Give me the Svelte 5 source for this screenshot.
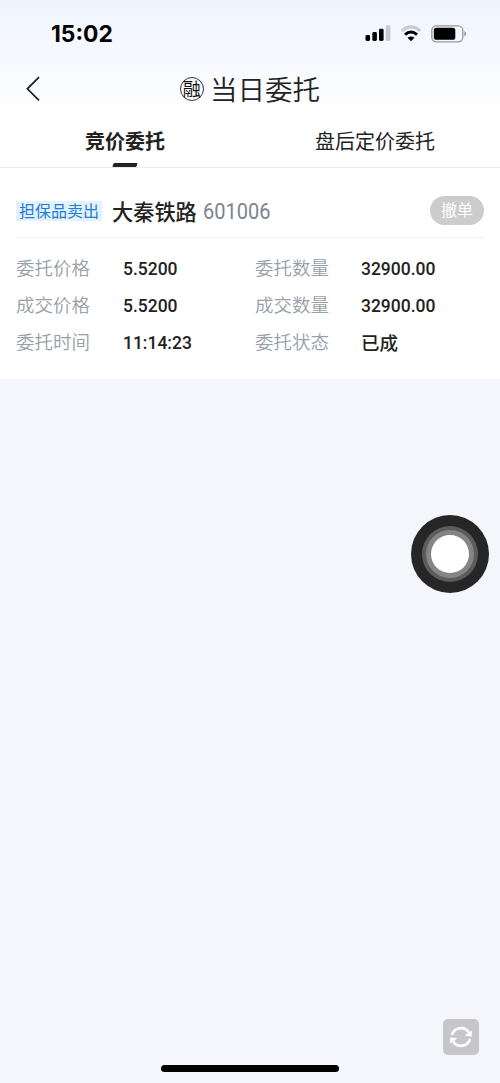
<script lang="ts">
	const tabs = ['竞价委托', '盘后定价委托'];
	let active = $state(0);

	const order = {
		side: '担保品卖出',
		name: '大秦铁路',
		code: '601006',
		fields: [
			{ label: '委托价格', value: '5.5200', num: true },
			{ label: '委托数量', value: '32900.00', num: true },
			{ label: '成交价格', value: '5.5200', num: true },
			{ label: '成交数量', value: '32900.00', num: true },
			{ label: '委托时间', value: '11:14:23', num: true },
			{ label: '委托状态', value: '已成', num: false }
		]
	};
</script>

<div class="screen">
	<header>
		<div class="statusbar">
			<span class="clock">15:02</span>
			<div class="indicators">
				<svg width="26" height="17" viewBox="0 0 26 17">
					<rect x="0.5" y="10" width="4.6" height="6" rx="1.4" />
					<rect x="7.3" y="7" width="4.6" height="9" rx="1.4" />
					<rect x="14" y="3.8" width="4.6" height="12.2" rx="1.4" />
					<rect x="20.8" y="0.3" width="4.6" height="15.7" rx="1.4" fill="#c8cacf" />
				</svg>
				<svg width="22" height="17" viewBox="0 0 22 17">
					<path d="M1.7 5.8 Q11 -2 20.3 5.8" fill="none" stroke="#c8cacf" stroke-width="3" />
					<path d="M5 9.6 Q11 4.4 17 9.6" fill="none" stroke="#000" stroke-width="3" />
					<path d="M7.5 12.8 Q11 10.2 14.5 12.8 L11 16.2 Z" />
				</svg>
				<svg width="36" height="18" viewBox="0 0 36 18">
					<rect x="0.8" y="0.8" width="31" height="16" rx="4.5" fill="none" stroke="#96989c" stroke-width="1.3" />
					<rect x="2.8" y="2.8" width="21.5" height="12" rx="2.6" />
					<path d="M33.3 6 Q35.2 7 35.2 8.8 Q35.2 10.6 33.3 11.6 Z" fill="#96989c" />
				</svg>
			</div>
		</div>
		<div class="navbar">
			<button class="back" aria-label="返回">
				<svg width="16" height="26" viewBox="0 0 16 26">
					<path d="M14 1.2 L2.4 12.8 L14 24.4" fill="none" stroke="#222" stroke-width="1.8" />
				</svg>
			</button>
			<span class="margin">融</span>
			<h1>当日委托</h1>
		</div>
	</header>

	<nav>
		{#each tabs as tab, i}
			<button class="tab" class:active={active === i} onclick={() => active = i}>
				<span>{tab}</span>
				<i></i>
			</button>
		{/each}
	</nav>

	<section class="order">
		<div class="head">
			<span class="side">{order.side}</span>
			<span class="name">{order.name}</span>
			<span class="code">{order.code}</span>
			<button class="cancel">撤单</button>
		</div>
		<div class="fields">
			{#each order.fields as field}
				<span class="label">{field.label}</span>
				<span class="value" class:num={field.num}>{field.value}</span>
			{/each}
		</div>
	</section>

	<div class="touch"><div class="ring"><div class="inner"><div class="dot"></div></div></div></div>

	<button class="refresh" aria-label="刷新">
		<svg width="24" height="24" viewBox="0 0 24 24">
			<path d="M3 9.8 A9.3 9.3 0 0 1 20 7.8" fill="none" stroke="#fff" stroke-width="2.6" />
			<path d="M21 14.2 A9.3 9.3 0 0 1 4 16.2" fill="none" stroke="#fff" stroke-width="2.6" />
			<path d="M15.6 10.4 L22.6 11.8 L23 5.6 Z" fill="#fff" />
			<path d="M8.4 13.6 L1.4 12.2 L1 18.4 Z" fill="#fff" />
		</svg>
	</button>

	<div class="home"></div>
</div>

<style>
	:global(body) {
		background: #f4f6fb;
	}

	.screen {
		position: relative;
		width: 500px;
		height: 1083px;
		overflow: hidden;
		background: #f4f6fb;
		color: #222;
		font-family: "Noto Sans CJK SC", sans-serif;
	}

	button {
		border: 0;
		padding: 0;
		background: none;
		color: inherit;
		font-family: inherit;
	}

	svg {
		display: block;
	}

	header {
		height: 116px;
		background: linear-gradient(#eff4ff, #f8faff 60%, #fff);
	}

	.statusbar {
		height: 62px;
		box-sizing: border-box;
		padding: 5px 33px 0 51px;
		display: flex;
		align-items: center;
		justify-content: space-between;
	}

	.clock {
		font: 700 22.8px/26px Inter, sans-serif;
		color: #000;
	}

	.indicators {
		display: flex;
		align-items: center;
		gap: 9px;
	}

	.navbar {
		height: 53px;
		display: flex;
		align-items: center;
	}

	.back {
		width: 16px;
		margin-left: 25px;
	}

	.margin {
		width: 24px;
		height: 24px;
		box-sizing: border-box;
		margin-left: 139px;
		border: 1px solid #333;
		border-radius: 50%;
		font-size: 18px;
		line-height: 21px;
		text-align: center;
		text-indent: -0.5px;
		color: #111;
	}

	h1 {
		margin: 0 0 0 6px;
		padding-bottom: 2px;
		font-size: 27.5px;
		line-height: 40px;
		font-weight: 350;
	}

	nav {
		display: flex;
		height: 52px;
		box-sizing: border-box;
		background: #fff;
		border-bottom: 1px solid #ebebeb;
	}

	.tab {
		flex: 1;
		display: flex;
		flex-direction: column;
		align-items: center;
		justify-content: space-between;
		font-size: 20px;
		line-height: 30px;
		padding-top: 10px;
	}

	.tab i {
		width: 24px;
		height: 4px;
	}

	.tab.active {
		font-weight: 600;
	}

	.tab.active i {
		background: #222;
		transform: skewX(-20deg);
		border-radius: 1px;
	}

	.order {
		height: 211px;
		box-sizing: border-box;
		padding: 16px 16px 0;
		background: #fff;
	}

	.head {
		display: flex;
		align-items: center;
		height: 53px;
		border-bottom: 1px solid #f3f3f3;
	}

	.side {
		width: 86px;
		height: 20px;
		line-height: 19px;
		font-size: 16px;
		text-align: center;
		background: #e4f1fe;
		color: #1a7fd9;
	}

	.name {
		margin-left: 10px;
		font-size: 21.2px;
		line-height: 28px;
		font-weight: 500;
	}

	.code {
		margin-left: 6px;
		padding-top: 2px;
		font: 400 21.5px/28px Roboto, sans-serif;
		transform: scaleX(0.93);
		transform-origin: left;
		color: #7c858f;
	}

	.cancel {
		width: 54px;
		height: 29px;
		box-sizing: border-box;
		margin-left: auto;
		padding-bottom: 3px;
		border-radius: 15px;
		background: #ccc;
		color: #fff;
		font-size: 16px;
		line-height: 26px;
	}

	.fields {
		display: grid;
		grid-template-columns: 107px 132px 106px 1fr;
		grid-auto-rows: 37.3px;
		align-items: center;
		padding-top: 11px;
	}

	.label {
		font-size: 18.5px;
		font-weight: 350;
		line-height: 28px;
		padding-bottom: 2px;
		color: #979fa9;
	}

	.value {
		font-size: 18.5px;
		font-weight: 500;
		line-height: 28px;
		padding-bottom: 1px;
	}

	/* condensed figures, DIN-like */
	.num {
		font: 500 19px/28px Roboto, sans-serif;
		transform: scaleX(0.92);
		transform-origin: left;
		padding: 2px 0 0;
	}

	.touch {
		position: absolute;
		left: 411px;
		top: 515px;
		width: 78px;
		height: 78px;
		border-radius: 50%;
		background: #262626;
		display: grid;
		place-items: center;
	}

	.ring,
	.inner,
	.dot {
		display: grid;
		place-items: center;
		border-radius: 50%;
	}

	.ring {
		width: 56px;
		height: 56px;
		background: #5c5c5c;
	}

	.inner {
		width: 48px;
		height: 48px;
		background: #858585;
	}

	.dot {
		width: 38px;
		height: 38px;
		background: #fff;
	}

	.refresh {
		position: absolute;
		left: 443px;
		top: 1019px;
		width: 36px;
		height: 36px;
		border-radius: 5px;
		background: #c7c7c9;
		display: grid;
		place-items: center;
	}

	.home {
		position: absolute;
		left: 161px;
		top: 1065px;
		width: 178px;
		height: 7px;
		border-radius: 4px;
		background: #000;
	}
</style>
